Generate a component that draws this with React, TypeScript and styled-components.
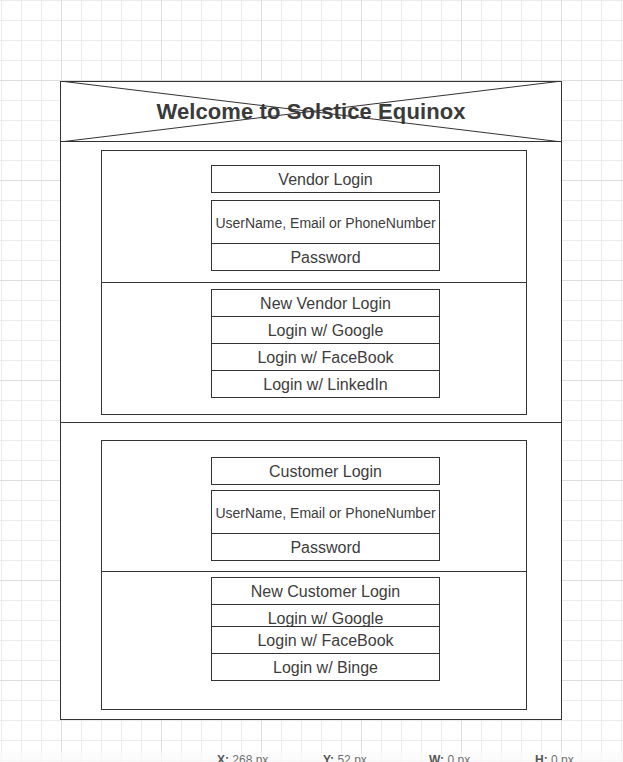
import styled, { createGlobalStyle } from "styled-components";

const GlobalStyle = createGlobalStyle`
  html, body {
    margin: 0;
    padding: 0;
    height: 762px;
    overflow: hidden;
  }
  body {
    font-family: "Liberation Sans", Arial, sans-serif;
    color: #333;
    background-color: #ffffff;
    background-image:
      linear-gradient(#dedede 1px, transparent 1px),
      linear-gradient(90deg, #dedede 1px, transparent 1px),
      linear-gradient(#ececec 1px, transparent 1px),
      linear-gradient(90deg, #ececec 1px, transparent 1px);
    background-size: 100px 100px, 100px 100px, 20px 20px, 20px 20px;
    background-position: 0 80px, 61px 0, 0 0, 1px 0;
  }
  *, *::before, *::after {
    box-sizing: border-box;
  }
`;

const Page = styled.div`
  display: flex;
  flex-direction: column;
  padding-top: 81px;
  height: 762px;
`;

const Panel = styled.div`
  margin-left: 60px;
  width: 502px;
  border: 1px solid #333;
  background: #fff;
  display: flex;
  flex-direction: column;
`;

const Header = styled.div`
  position: relative;
  height: 60px;
  border-bottom: 1px solid #333;
  display: flex;
  align-items: center;
  justify-content: center;

  h1 {
    margin: 0;
    font-size: 22px;
    font-weight: 700;
    letter-spacing: 0.1px;
    color: #3a3a3a;
    line-height: 1;
  }

  svg {
    position: absolute;
    top: -1px;
    left: -1px;
    width: calc(100% + 2px);
    height: calc(100% + 2px);
    pointer-events: none;
  }
`;

const Section = styled.div<{ $top: number; $bottom: number; $divider?: boolean }>`
  padding: ${(p) => p.$top}px 0 ${(p) => p.$bottom}px 40px;
  border-bottom: ${(p) => (p.$divider ? "1px solid #333" : "none")};
`;

const Card = styled.div`
  width: 426px;
  border: 1px solid #333;
  display: flex;
  flex-direction: column;
`;

const CardPart = styled.div<{ $top: number; $bottom: number; $divider?: boolean }>`
  padding: ${(p) => p.$top}px 0 ${(p) => p.$bottom}px 109px;
  border-bottom: ${(p) => (p.$divider ? "1px solid #333" : "none")};
  display: flex;
  flex-direction: column;
`;

const Stack = styled.div<{ $gap?: number }>`
  display: flex;
  flex-direction: column;
  margin-top: ${(p) => p.$gap ?? 0}px;
`;

const Cell = styled.div<{ $h?: number; $lh?: number; $small?: boolean }>`
  position: relative;
  width: 229px;
  height: ${(p) => p.$h ?? 28}px;
  border: 1px solid #333;
  background: transparent;
  text-align: center;
  font-size: ${(p) => (p.$small ? 14 : 16)}px;
  line-height: ${(p) => p.$lh ?? (p.$h ?? 28) - 2}px;
  padding-top: 1px;
  color: #3d3d3d;
  white-space: nowrap;
  overflow: visible;

  & + & {
    margin-top: -1px;
  }
`;

const StatusBar = styled.div`
  flex: 1;
  overflow: hidden;
  display: flex;
  padding: 33px 0 0 217px;
  background: linear-gradient(
    to bottom,
    rgba(255, 255, 255, 0) 0px,
    rgba(255, 255, 255, 0) 30px,
    rgba(250, 250, 250, 0.75) 34px
  );
`;

const Stat = styled.div`
  flex: 0 0 106px;
  font-size: 12px;
  line-height: 14px;
  color: #707070;
  white-space: nowrap;

  b {
    font-weight: 700;
    color: #555;
  }
`;

interface LoginBlockProps {
  title: string;
  extras: string[];
  pads: {
    sectionTop: number;
    sectionBottom: number;
    top: number;
    gap: number;
    mid: number;
    lowTop: number;
    lowBottom: number;
  };
  divider?: boolean;
  squeezed?: number;
}

function LoginBlock({ title, extras, pads, divider, squeezed }: LoginBlockProps) {
  return (
    <Section $top={pads.sectionTop} $bottom={pads.sectionBottom} $divider={divider}>
      <Card>
        <CardPart $top={pads.top} $bottom={pads.mid} $divider>
          <Cell>{title}</Cell>
          <Stack $gap={pads.gap}>
            <Cell $h={44} $small>
              UserName, Email or PhoneNumber
            </Cell>
            <Cell>Password</Cell>
          </Stack>
        </CardPart>
        <CardPart $top={pads.lowTop} $bottom={pads.lowBottom}>
          <Stack>
            {extras.map((label, i) => (
              <Cell key={label} $h={i === squeezed ? 23 : 28} $lh={26}>
                {label}
              </Cell>
            ))}
          </Stack>
        </CardPart>
      </Card>
    </Section>
  );
}

export default function App() {
  return (
    <>
      <GlobalStyle />
      <Page>
        <Panel>
          <Header>
            <h1>Welcome to Solstice Equinox</h1>
            <svg viewBox="0 0 100 100" preserveAspectRatio="none">
              <line x1="0" y1="0" x2="100" y2="100" stroke="#333" strokeWidth="1" vectorEffect="non-scaling-stroke" />
              <line x1="0" y1="100" x2="100" y2="0" stroke="#333" strokeWidth="1" vectorEffect="non-scaling-stroke" />
            </svg>
          </Header>
          <LoginBlock
            title="Vendor Login"
            extras={["New Vendor Login", "Login w/ Google", "Login w/ FaceBook", "Login w/ LinkedIn"]}
            pads={{ sectionTop: 8, sectionBottom: 7, top: 14, gap: 7, mid: 11, lowTop: 6, lowBottom: 16 }}
            divider
          />
          <LoginBlock
            title="Customer Login"
            extras={["New Customer Login", "Login w/ Google", "Login w/ FaceBook", "Login w/ Binge"]}
            pads={{ sectionTop: 17, sectionBottom: 9, top: 16, gap: 5, mid: 10, lowTop: 5, lowBottom: 28 }}
            squeezed={1}
          />
        </Panel>
        <StatusBar>
          <Stat>
            <b>X:</b> 268 px
          </Stat>
          <Stat>
            <b>Y:</b> 52 px
          </Stat>
          <Stat>
            <b>W:</b> 0 px
          </Stat>
          <Stat>
            <b>H:</b> 0 px
          </Stat>
        </StatusBar>
      </Page>
    </>
  );
}
